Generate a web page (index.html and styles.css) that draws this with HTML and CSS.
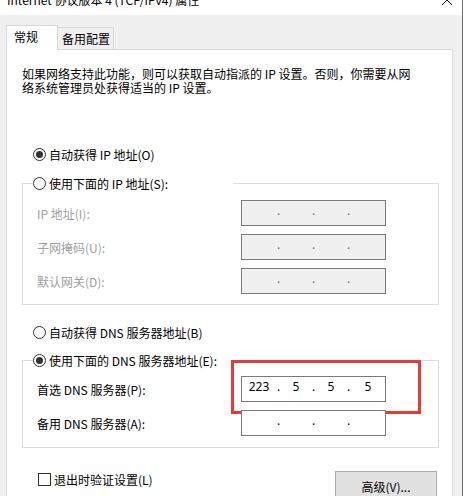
FILE: index.html
```html
<!DOCTYPE html>
<html lang="zh-CN">
<head>
<meta charset="utf-8">
<title>Internet 协议版本 4 (TCP/IPv4) 属性</title>
<link rel="stylesheet" href="styles.css">
</head>
<body>
<div class="window">
  <div class="titlebar">
    <span class="title">Internet 协议版本 4 (TCP/IPv4) 属性</span>
    <svg class="close" width="10" height="10" viewBox="0 0 10 10"><path d="M0 0L10 10M10 0L0 10" stroke="#111" stroke-width="1"/></svg>
  </div>
  <div class="dialog">
    <div class="tabs">
      <div class="tab active">常规</div>
      <div class="tab">备用配置</div>
    </div>
    <div class="panel">
      <p class="intro">如果网络支持此功能，则可以获取自动指派的 IP 设置。否则，你需要从网<br>络系统管理员处获得适当的 IP 设置。</p>

      <div class="radio-row row-auto-ip"><span class="radio checked"></span><span>自动获得 IP 地址(O)</span></div>

      <fieldset class="group group-ip">
        <legend class="legend"><span class="radio"></span><span>使用下面的 IP 地址(S):</span></legend>
        <div class="rows">
          <div class="field-row disabled">
            <span class="label">IP 地址(I):</span>
            <div class="ipbox"><span class="seg wide"></span><span class="dot">.</span><span class="seg"></span><span class="dot">.</span><span class="seg"></span><span class="dot">.</span><span class="seg wide"></span></div>
          </div>
          <div class="field-row disabled">
            <span class="label">子网掩码(U):</span>
            <div class="ipbox"><span class="seg wide"></span><span class="dot">.</span><span class="seg"></span><span class="dot">.</span><span class="seg"></span><span class="dot">.</span><span class="seg wide"></span></div>
          </div>
          <div class="field-row disabled">
            <span class="label">默认网关(D):</span>
            <div class="ipbox"><span class="seg wide"></span><span class="dot">.</span><span class="seg"></span><span class="dot">.</span><span class="seg"></span><span class="dot">.</span><span class="seg wide"></span></div>
          </div>
        </div>
      </fieldset>

      <div class="radio-row row-auto-dns"><span class="radio"></span><span>自动获得 DNS 服务器地址(B)</span></div>

      <fieldset class="group group-dns">
        <legend class="legend"><span class="radio checked"></span><span>使用下面的 DNS 服务器地址(E):</span></legend>
        <div class="rows">
          <div class="field-row">
            <span class="label">首选 DNS 服务器(P):</span>
            <div class="ipbox enabled">
              <span class="seg wide">223</span><span class="dot">.</span><span class="seg">5</span><span class="dot">.</span><span class="seg">5</span><span class="dot">.</span><span class="seg wide">5</span>
              <span class="highlight"></span>
            </div>
          </div>
          <div class="field-row">
            <span class="label">备用 DNS 服务器(A):</span>
            <div class="ipbox enabled"><span class="seg wide"></span><span class="dot">.</span><span class="seg"></span><span class="dot">.</span><span class="seg"></span><span class="dot">.</span><span class="seg wide"></span></div>
          </div>
        </div>
      </fieldset>

      <div class="footer">
        <label class="check-row"><span class="checkbox"></span><span>退出时验证设置(L)</span></label>
        <div class="button">高级(V)...</div>
      </div>
    </div>
  </div>
</div>
</body>
</html>
```

FILE: styles.css
```css
html, body {
  margin: 0;
  padding: 0;
  background: #ffffff;
}
body {
  width: 464px;
  height: 496px;
  overflow: hidden;
  font-family: "Noto Sans CJK SC", "Noto Sans", sans-serif;
  font-size: 12px;
  color: #000;
}
.window {
  width: 462px;
  height: 496px;
  border-right: 1px solid #6e6e6e;
  background: #f0f0f0;
  display: flex;
  flex-direction: column;
}
.titlebar {
  height: 15px;
  flex: none;
  background: #ffffff;
  overflow: hidden;
  display: flex;
  justify-content: space-between;
  align-items: flex-start;
  padding: 0 10px 0 7px;
}
.title {
  line-height: 16px;
  margin-top: -8px;
  white-space: nowrap;
}
.close {
  display: block;
  margin-top: -5px;
  flex: none;
}
.dialog {
  flex: 1;
  padding: 10px 9px 0 6px;
  display: flex;
  flex-direction: column;
}
.tabs {
  display: flex;
  align-items: flex-end;
  margin-bottom: -1px;
  position: relative;
  z-index: 1;
}
.tab {
  box-sizing: border-box;
  border: 1px solid #d9d9d9;
  border-bottom: none;
  line-height: 15px;
  white-space: nowrap;
}
.tab.active {
  width: 52px;
  height: 25px;
  background: #ffffff;
  padding: 3px 0 0 7px;
}
.tab:not(.active) {
  width: 57px;
  height: 22px;
  margin-left: -1px;
  margin-bottom: 1px;
  background: #f0f0f0;
  padding: 3px 0 0 4px;
}
.panel {
  flex: 1;
  background: #ffffff;
  border: 1px solid #d9d9d9;
  border-bottom: none;
  padding: 17px 13px 0 15px;
}
.intro {
  margin: 0;
  line-height: 14px;
}
.radio-row {
  display: flex;
  align-items: center;
  height: 15px;
  line-height: 15px;
  padding-left: 11px;
  gap: 3px;
  white-space: nowrap;
}
.row-auto-ip {
  margin-top: 52px;
}
.row-auto-dns {
  margin-top: 20px;
}
.radio {
  box-sizing: border-box;
  width: 13px;
  height: 13px;
  border: 1px solid #333333;
  border-radius: 50%;
  display: flex;
  align-items: center;
  justify-content: center;
  flex: none;
  background: #fff;
}
.radio.checked::after {
  content: "";
  width: 7px;
  height: 7px;
  border-radius: 50%;
  background: #333333;
}
.group {
  margin: 0;
  padding: 0;
  min-width: 0;
  border: 1px solid #dcdcdc;
}
.group-ip {
  margin-top: 14px;
}
.group-dns {
  margin-top: 13px;
}
.legend {
  width: 200px;
  box-sizing: border-box;
  height: 15px;
  line-height: 15px;
  padding: 0;
  margin-left: 10px;
  display: flex;
  align-items: center;
  gap: 3px;
  white-space: nowrap;
}
.rows {
  display: flex;
  flex-direction: column;
  gap: 8px;
  padding: 9px 0 10px 14px;
}
.group-dns .rows {
  padding: 8px 0 11px 14px;
}
.field-row {
  display: flex;
  align-items: center;
  height: 26px;
}
.label {
  width: 204px;
  flex: none;
  line-height: 15px;
  white-space: nowrap;
}
.field-row.disabled .label {
  color: #a0a0a0;
}
.ipbox {
  position: relative;
  box-sizing: border-box;
  width: 145px;
  height: 26px;
  border: 1px solid #7a7a7a;
  background: #f0f0f0;
  display: flex;
  align-items: center;
  padding-bottom: 4px;
  font-family: "Noto Sans", sans-serif;
  line-height: 14px;
}
.ipbox.enabled {
  background: #ffffff;
}
.seg {
  width: 30px;
  text-align: center;
  flex: none;
}
.seg.wide {
  width: 34px;
}
.dot {
  width: 5px;
  text-align: center;
  flex: none;
  color: #000;
}
.field-row.disabled .dot {
  color: #6d6d6d;
}
.highlight {
  position: absolute;
  left: -11px;
  top: -17px;
  width: 190px;
  height: 54px;
  box-sizing: border-box;
  border: 3px solid #e83a3a;
  pointer-events: none;
}
.footer {
  display: flex;
  justify-content: space-between;
  align-items: flex-start;
  margin-top: 23px;
  padding: 0 2px 0 16px;
}
.check-row {
  display: flex;
  align-items: center;
  gap: 3px;
  height: 15px;
  line-height: 15px;
  margin-top: 1px;
  white-space: nowrap;
}
.checkbox {
  box-sizing: border-box;
  width: 13px;
  height: 13px;
  border: 1px solid #333333;
  background: #fff;
  flex: none;
}
.button {
  box-sizing: border-box;
  width: 102px;
  height: 30px;
  background: #e1e1e1;
  border: 1px solid #adadad;
  display: flex;
  align-items: center;
  justify-content: center;
  line-height: 15px;
}
```
